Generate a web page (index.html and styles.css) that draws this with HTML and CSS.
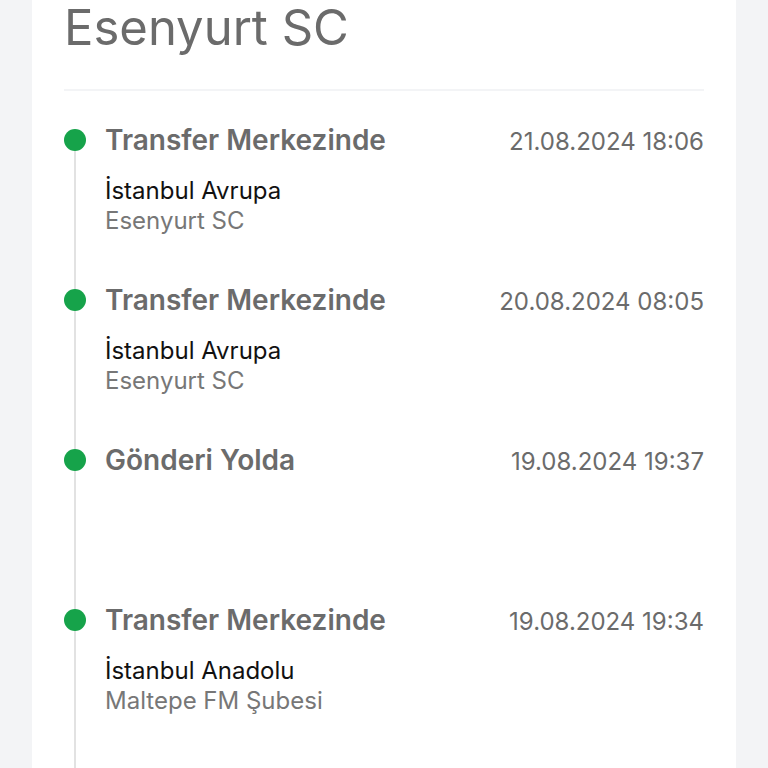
FILE: index.html
```html
<!DOCTYPE html>
<html lang="tr">
<head>
  <meta charset="UTF-8" />
  <meta name="viewport" content="width=device-width, initial-scale=1.0" />
  <title>Gönderi Takibi</title>
  <link rel="stylesheet" href="styles.css">
</head>
<body>
  <div class="card">
    <h1 class="branch">Esenyurt SC</h1>
    <ul class="timeline">
      <li class="event">
        <div class="rail"><span class="dot"></span></div>
        <div class="info">
          <div class="head">
            <span class="status">Transfer Merkezinde</span>
            <span class="date">21.08.2024 18:06</span>
          </div>
          <div class="region">İstanbul Avrupa</div>
          <div class="place">Esenyurt SC</div>
        </div>
      </li>
      <li class="event">
        <div class="rail"><span class="dot"></span></div>
        <div class="info">
          <div class="head">
            <span class="status">Transfer Merkezinde</span>
            <span class="date">20.08.2024 08:05</span>
          </div>
          <div class="region">İstanbul Avrupa</div>
          <div class="place">Esenyurt SC</div>
        </div>
      </li>
      <li class="event">
        <div class="rail"><span class="dot"></span></div>
        <div class="info">
          <div class="head">
            <span class="status">Gönderi Yolda</span>
            <span class="date">19.08.2024 19:37</span>
          </div>
        </div>
      </li>
      <li class="event">
        <div class="rail"><span class="dot"></span></div>
        <div class="info">
          <div class="head">
            <span class="status">Transfer Merkezinde</span>
            <span class="date">19.08.2024 19:34</span>
          </div>
          <div class="region">İstanbul Anadolu</div>
          <div class="place">Maltepe FM Şubesi</div>
        </div>
      </li>
    </ul>
  </div>
</body>
</html>
```

FILE: styles.css
```css
html, body {
  margin: 0;
  padding: 0;
  background-color: #f3f4f6;
  font-family: Inter, "Noto Sans", sans-serif;
  overflow: hidden;
}
.card {
  margin: 0 32px;
  padding: 0 32px;
  background: white;
  min-height: 768px;
  box-sizing: border-box;
}
.branch {
  margin: 0;
  padding-bottom: 33px;
  font-size: 49px;
  line-height: 56px;
  font-weight: 400;
  color: #6b6b6b;
  border-bottom: 2px solid #f3f4f6;
}
.timeline {
  list-style: none;
  margin: 0;
  padding: 33px 0 0;
}
.event {
  display: grid;
  grid-template-columns: 22px 1fr;
  column-gap: 19px;
  min-height: 160px;
}
.event:last-child {
  min-height: 200px;
}
.rail {
  background: linear-gradient(#e2e2e2, #e2e2e2) center / 2px 100% no-repeat;
}
.event:first-child .rail {
  background-position: center 16px;
}
.dot {
  display: block;
  width: 22px;
  height: 22px;
  margin-top: 5px;
  border-radius: 50%;
  background: #16a34a;
}
.head {
  display: flex;
  justify-content: space-between;
  align-items: baseline;
  line-height: 32px;
}
.status {
  font-size: 28px;
  font-weight: 600;
  color: #6b6b6b;
}
.date {
  font-size: 24px;
  color: #6b6b6b;
}
.region {
  margin-top: 18px;
  font-size: 24px;
  line-height: 30px;
  color: #111;
}
.place {
  font-size: 24px;
  line-height: 30px;
  color: #777;
}
```
